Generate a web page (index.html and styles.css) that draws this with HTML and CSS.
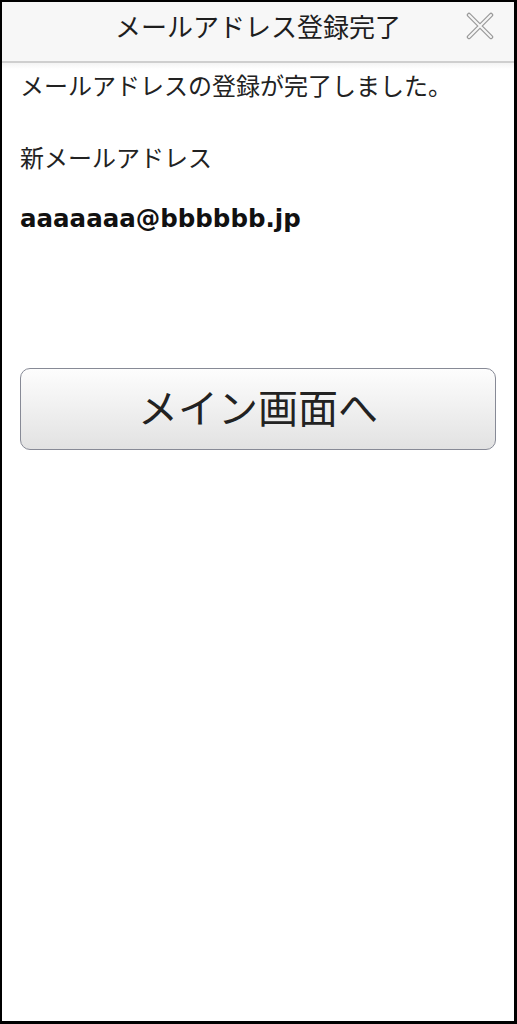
FILE: index.html
```html
<!DOCTYPE html>
<html lang="ja">
<head>
<meta charset="UTF-8">
<meta name="viewport" content="width=device-width, initial-scale=1.0">
<title>メールアドレス登録完了</title>
<link rel="stylesheet" href="styles.css">
</head>
<body>
<div class="frame">
    <!-- ヘッダー -->
    <div class="header">
        <h1 class="header-title">メールアドレス登録完了</h1>
        <button class="close-btn" aria-label="閉じる">
            <svg width="28" height="28" viewBox="0 0 28 28">
                <path d="M3 3 L25 25 M25 3 L3 25" stroke="#9a9a9a" stroke-width="4.5" stroke-linecap="round" fill="none"/>
                <path d="M3 3 L25 25 M25 3 L3 25" stroke="#f7f7f7" stroke-width="2" stroke-linecap="round" fill="none"/>
            </svg>
        </button>
    </div>

    <div class="content">
        <p class="message">メールアドレスの登録が完了しました。</p>
        <p class="label">新メールアドレス</p>
        <p class="email">aaaaaaa@bbbbbb.jp</p>
        <button class="main-btn">メイン画面へ</button>
    </div>
</div>
</body>
</html>
```

FILE: styles.css
```css
html, body {
    margin: 0;
    padding: 0;
    background-color: #000;
}

.frame {
    box-sizing: border-box;
    height: 1024px;
    border-top: 2px solid #000;
    border-left: 2px solid #000;
    border-right: 3px solid #000;
    border-bottom: 3px solid #000;
    background-color: #fff;
    font-family: "Noto Sans CJK JP", "Noto Sans", sans-serif;
    color: #222;
}

.header {
    position: relative;
    box-sizing: border-box;
    height: 61px;
    padding-bottom: 12px;
    background-color: #f7f7f7;
    border-bottom: 2px solid #cfcfcf;
    display: flex;
    align-items: center;
    justify-content: center;
}

.header-title {
    margin: 0;
    font-size: 26px;
    font-weight: normal;
    line-height: 36px;
    color: #1e1e1e;
}

.close-btn {
    position: absolute;
    right: 20px;
    top: 10px;
    width: 28px;
    height: 28px;
    padding: 0;
    border: none;
    background: none;
}

.close-btn svg {
    display: block;
}

.content {
    padding: 4px 18px 0 18px;
    background: linear-gradient(#f4f4f4, #fff 6px);
}

.content p {
    margin: 0;
    font-size: 24px;
    line-height: 36px;
}

.label {
    margin-top: 36px !important;
}

.email {
    margin-top: 26px !important;
    font-family: "DejaVu Sans", sans-serif;
    font-weight: bold;
    font-size: 24.5px !important;
    color: #111;
}

.main-btn {
    display: block;
    box-sizing: border-box;
    width: 100%;
    height: 82px;
    margin-top: 131px;
    border: 1px solid #878a96;
    border-radius: 10px;
    background: linear-gradient(#fdfdfd, #e2e2e2);
    font-family: "Noto Sans CJK JP", sans-serif;
    font-size: 40px;
    color: #222;
    padding: 0 0 6px 0;
}
```
